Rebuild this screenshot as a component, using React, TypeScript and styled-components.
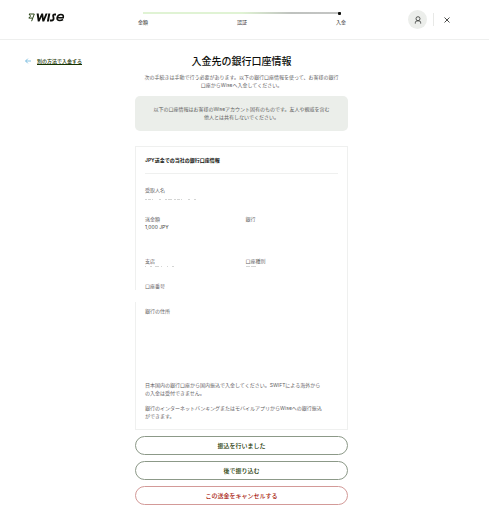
import React from "react";
import styled, { createGlobalStyle } from "styled-components";

const GlobalStyle = createGlobalStyle`
  * { box-sizing: border-box; }
  body {
    margin: 0;
    background: #fff;
    color: #5f615f;
    font-family: Inter, "Noto Sans CJK JP", sans-serif;
    font-size: 5px;
    line-height: 8px;
  }
  h1, h2, p, dl, dt, dd, ol { margin: 0; padding: 0; }
  button { font: inherit; cursor: pointer; }
`;

const columns = "minmax(0, 1fr) 213px minmax(0, 1fr)";

const Header = styled.header`
  display: grid;
  grid-template-columns: ${columns};
  height: 40px;
  padding-right: 6px;
  border-bottom: 1px solid #eeefee;
`;

const HomeLink = styled.a`
  display: block;
  width: 37px;
  height: 9px;
  margin: 13px 0 0 28px;
  svg { display: block; }
`;

const Stepper = styled.nav`
  padding: 12px 2px 0 3px;
`;

const Track = styled.div`
  display: flex;
  align-items: center;
  justify-content: flex-end;
  height: 2px;
  margin: 0 5px;
  background: linear-gradient(90deg, #e0f3d4 50%, #bfc2bf 75%, #c4c5c4);
`;

const TrackDot = styled.span`
  width: 3px;
  height: 3px;
  border-radius: 1px;
  background: #0e0f0c;
`;

const Steps = styled.ol`
  display: flex;
  justify-content: space-between;
  margin-top: 4px;
  list-style: none;
  color: #2c2e2b;
`;

const Actions = styled.div`
  display: flex;
  align-items: center;
  justify-content: flex-end;
  padding-right: 31px;
`;

const Avatar = styled.button`
  display: grid;
  place-items: center;
  width: 19px;
  height: 19px;
  padding: 0;
  border: 0;
  border-radius: 50%;
  background: #eceeeb;
`;

const Divider = styled.span`
  width: 1px;
  height: 13px;
  margin: 0 8px 0 6px;
  background: #e8e9e7;
`;

const CloseButton = styled.button`
  display: grid;
  place-items: center;
  width: 10px;
  height: 10px;
  padding: 0;
  border: 0;
  background: none;
`;

const Page = styled.div`
  display: grid;
  grid-template-columns: ${columns};
  padding: 14px 6px 8px 0;
`;

const BackLink = styled.a`
  display: flex;
  align-items: center;
  gap: 6px;
  justify-self: start;
  align-self: start;
  height: 14px;
  margin-left: 25px;
  font-weight: 500;
  color: #163300;
  text-decoration: none;
  span { text-decoration: underline; }
`;

const Title = styled.h1`
  font-size: 10px;
  line-height: 14px;
  font-weight: 500;
  text-align: center;
  color: #0e0f0c;
`;

const Lead = styled.p`
  margin-top: 5px;
  text-align: center;
  white-space: nowrap;
`;

const Notice = styled.p`
  margin-top: 7px;
  padding: 9px 8px 10px;
  border-radius: 5px;
  background: #ebeeea;
  text-align: center;
  white-space: nowrap;
`;

const Card = styled.section`
  margin-top: 15px;
  padding: 9px;
  border: 1px solid #eff0ef;
`;

const CardTitle = styled.h2`
  padding-bottom: 9px;
  border-bottom: 1px solid #eff0ef;
  font-size: 5px;
  font-weight: 600;
  color: #0e0f0c;
`;

const Details = styled.dl`
  display: grid;
  grid-template-columns: 1fr 1fr;
  column-gap: 8px;
  padding-top: 12px;
`;

const Field = styled.div<{ $space: number; $wide?: boolean }>`
  grid-column: ${(p) => (p.$wide ? "1 / -1" : "auto")};
  height: ${(p) => p.$space}px;
  dd { color: #3c3e3b; }
`;

const BlankValue = styled.dd`
  height: 12px;
  margin-left: -12px;
  background: #fff;
`;

const Faint = styled.svg<{ $gap: number }>`
  display: block;
  margin-top: ${(p) => p.$gap}px;
`;

const Note = styled.p`
  white-space: nowrap;
  & + & { margin-top: 7px; }
`;

const Buttons = styled.div`
  display: grid;
  gap: 6px;
  margin-top: 6px;
`;

const PillButton = styled.button<{ $danger?: boolean }>`
  height: 19px;
  padding: 0;
  border: 1px solid ${(p) => (p.$danger ? "#d39a98" : "#8c9988")};
  border-radius: 10px;
  background: #fff;
  font-size: 6px;
  font-weight: 500;
  color: ${(p) => (p.$danger ? "#a8200d" : "#163300")};
`;

type TraceProps = { dashes: string; width: number; gap?: number };

const Trace = ({ dashes, width, gap = 0 }: TraceProps) => (
  <Faint $gap={gap} width={width} height="1" aria-hidden="true">
    <path d={`M0 .5H${width}`} stroke="#d4d5d4" strokeDasharray={dashes} />
  </Faint>
);

const Logo = () => (
  <svg width="37" height="9" viewBox="0 0 37 9" fill="none" stroke="#163300">
    <path d="M1 1H6.3L3.6 8.2M1 1L2.6 3.1L.8 5.1H4.4" strokeWidth=".9" />
    <g fill="#0e0f0c" stroke="none">
      <path d="M8.6 .6H10.7L11.2 5.2L13.4 .6H15.1L15.7 5.2L17.6 .6H19.6L16.2 8.4H14.4L13.7 3.8L11.5 8.4H9.8Z" />
      <path d="M20.3 .6H22.3L20.9 8.4H18.9Z" />
    </g>
    <g stroke="#0e0f0c">
      <path d="M28 1.5H26.8Q24.7 1.5 25.2 3.3L25.6 5Q25.7 7.5 23.5 7.5H21.9" strokeWidth="1.8" />
      <path d="M29 4.8H35.2Q35.9 1.5 32.9 1.5Q29.8 1.5 29.1 4.8Q28.8 7.5 31.6 7.5Q33.5 7.5 35 6.5" strokeWidth="1.6" />
    </g>
  </svg>
);

export default function App() {
  return (
    <>
      <GlobalStyle />
      <Header>
        <HomeLink href="#" aria-label="Wise"><Logo /></HomeLink>
        <Stepper>
          <Track><TrackDot /></Track>
          <Steps><li>金額</li><li>認証</li><li>入金</li></Steps>
        </Stepper>
        <Actions>
          <Avatar aria-label="アカウント">
            <svg width="8" height="8" viewBox="0 0 8 8" fill="none" stroke="#454745" strokeWidth=".9">
              <circle cx="4" cy="2.7" r="2" />
              <path d="M1.3 7.6V6.8Q1.3 4.9 3 4.9H5Q6.7 4.9 6.7 6.8V7.6" />
            </svg>
          </Avatar>
          <Divider />
          <CloseButton aria-label="閉じる">
            <svg width="6" height="6" viewBox="0 0 6 6" stroke="#353734" strokeWidth=".9">
              <path d="M.5 .5L5.5 5.5M5.5 .5L.5 5.5" />
            </svg>
          </CloseButton>
        </Actions>
      </Header>
      <Page>
        <BackLink href="#">
          <svg width="6" height="6" viewBox="0 0 6 6" fill="none" stroke="#68b4dc" strokeWidth=".8">
            <path d="M6 3H.6M2.8 .7L.6 3L2.8 5.3" />
          </svg>
          <span>別の方法で入金する</span>
        </BackLink>
        <main>
          <Title>入金先の銀行口座情報</Title>
          <Lead>
            次の手続きは手動で行う必要があります。以下の銀行口座情報を使って、お客様の銀行<br />
            口座からWiseへ入金してください。
          </Lead>
          <Notice>
            以下の口座情報はお客様のWiseアカウント固有のものです。友人や親戚を含む<br />
            他人とは共有しないでください。
          </Notice>
          <Card>
            <CardTitle>JPY送金での当社の銀行口座情報</CardTitle>
            <Details>
              <Field $space={29} $wide>
                <dt>受取人名</dt>
                <dd><Trace gap={5} width={52} dashes="2 1 3 1 1 6 2 4 2 1 4 2" /></dd>
              </Field>
              <Field $space={42}><dt>送金額</dt><dd>1,000 JPY</dd></Field>
              <Field $space={42}><dt>銀行</dt></Field>
              <Field $space={25}>
                <dt>支店</dt>
                <dd><Trace gap={1} width={30} dashes="1 4 2 3 4 2 1 5" /></dd>
              </Field>
              <Field $space={25}>
                <dt>口座種別</dt>
                <dd><Trace gap={1} width={12} dashes="4 1 5 2" /></dd>
              </Field>
              <Field $space={25} $wide><dt>口座番号</dt><BlankValue /></Field>
              <Field $space={74} $wide><dt>銀行の住所</dt></Field>
            </Details>
            <Note>
              日本国内の銀行口座から国内振込で入金してください。SWIFTによる海外から<br />
              の入金は受付できません。
            </Note>
            <Note>
              銀行のインターネットバンキングまたはモバイルアプリからWiseへの銀行振込<br />
              ができます。
            </Note>
          </Card>
          <Buttons>
            <PillButton>振込を行いました</PillButton>
            <PillButton>後で振り込む</PillButton>
            <PillButton $danger>この送金をキャンセルする</PillButton>
          </Buttons>
        </main>
      </Page>
    </>
  );
}
